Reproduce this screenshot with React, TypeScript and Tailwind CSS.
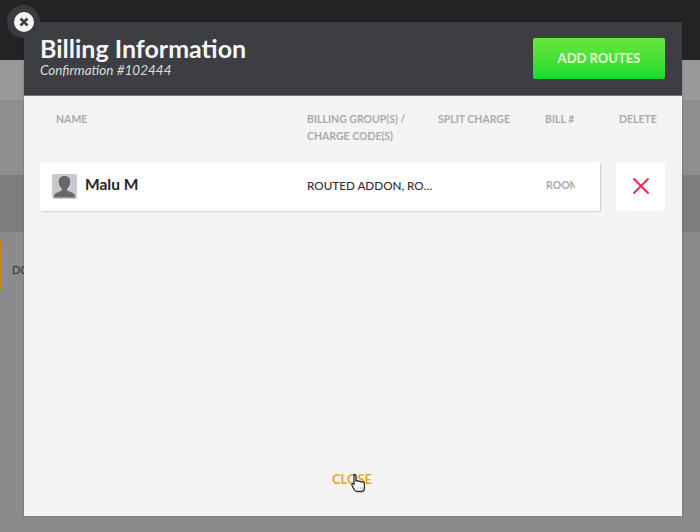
import React from "react";

const Avatar = () => (
  <div className="mt-[2px] h-[25px] w-[25px] shrink-0 overflow-hidden rounded-[2px] bg-[#c9c9cb]">
    <svg viewBox="0 0 25 25" className="h-full w-full">
      <path
        d="M12.5 2c-4 0-6 2.6-5.8 6 .1 2.8 1.5 5.2 3.1 6.4v2c-1.2 1-5.6 1.9-7 3.5-.6.7-.8 2.3-.8 3.6h21c0-1.3-.2-2.9-.8-3.6-1.4-1.6-5.8-2.5-7-3.5v-2c1.6-1.2 3-3.6 3.1-6.4.2-3.4-1.8-6-5.8-6z"
        fill="#68686c"
      />
    </svg>
  </div>
);

const Background = () => (
  <div className="flex h-[532px] w-[700px] flex-col bg-[#8b8b8d]">
    <div className="h-[60px] bg-[#232325]" />
    <div className="h-[40px] bg-[#99999a]" />
    <div className="h-[75px] bg-[#8e8e90]" />
    <div className="h-[57px] bg-[#7e7e7f]" />
    <div className="mt-[8px] flex h-[50px] items-center gap-[10px]">
      <div className="h-[50px] w-[2px] rounded-r-[2px] bg-[#cc8608]" />
      <span className="pt-[10px] text-[11px] font-medium text-[#38383a]">DONE</span>
    </div>
  </div>
);

export default function App() {
  return (
    <div className="relative h-[532px] w-[700px] overflow-hidden font-['Lato',sans-serif]">
      <Background />

      <div className="absolute left-[24px] top-[22px] flex h-[494px] w-[658px] flex-col bg-[#f4f4f5] shadow-[0_0_2px_rgba(0,0,0,0.25)]">
        <div className="flex h-[74px] items-start justify-between border-b border-[#77777a] bg-[#3d3e42] pl-[16px] pr-[17px]">
          <div className="pt-[11px]">
            <h1 className="text-[25px] font-bold leading-[30px] text-[#f4f4f5]">
              Billing Information
            </h1>
            <p className="text-[13.5px] italic leading-[14px] text-[#dcdcde]">
              Confirmation #102444
            </p>
          </div>
          <button className="mt-[16px] h-[41px] w-[132px] rounded-[2px] bg-gradient-to-b from-[#66e63f] to-[#0fdc2c] text-[13px] font-bold text-[#e6f7df]">
            ADD ROUTES
          </button>
        </div>

        <div className="flex-1 px-[16px]">
          <div className="flex h-[66px] pt-[15px] text-[10.5px] font-bold leading-[17px] text-[#ababad]">
            <div className="w-[267px] pl-[16px]">NAME</div>
            <div className="w-[131px]">
              BILLING GROUP(S) /<br />
              CHARGE CODE(S)
            </div>
            <div className="w-[107px]">SPLIT CHARGE</div>
            <div className="w-[74px]">BILL #</div>
            <div>DELETE</div>
          </div>

          <div className="flex gap-[16px]">
            <div className="flex h-[49px] w-[560px] items-center rounded-[2px] bg-white pb-[2px] pl-[12px] shadow-[1px_1px_1px_rgba(0,0,0,0.16)]">
              <div className="flex w-[255px] items-center gap-[8px]">
                <Avatar />
                <span className="pb-[1px] text-[15.5px] font-bold text-[#252527]">Malu M</span>
              </div>
              <div className="w-[239px] text-[11.7px] font-medium text-[#303032]">ROUTED ADDON, RO…</div>
              <div className="w-[29px] overflow-hidden text-[10.5px] font-bold text-[#a9a9ab]">ROOM</div>
            </div>
            <div className="flex h-[49px] w-[49px] items-center justify-center rounded-[2px] bg-white pb-[1px]">
              <svg viewBox="0 0 18 18" className="h-[18px] w-[18px]" fill="none" stroke="#f0284f" strokeWidth="2">
                <path d="M1.5 1.5 16.5 16.5M16.5 1.5 1.5 16.5" />
              </svg>
            </div>
          </div>
        </div>

        <div className="flex h-[76px] items-start justify-center border-t border-[#efeff0] pr-[2px] pt-[29px]">
          <span className="text-[13px] font-bold text-[#eba52b]">CLOSE</span>
        </div>
      </div>

      {/* close badge over the modal corner */}
      <div className="absolute left-[7px] top-[5px] flex h-[33px] w-[33px] items-center justify-center rounded-full bg-[#3a3b3f]">
        <div className="flex h-[20px] w-[20px] items-center justify-center rounded-full bg-[#f4f4f5]">
          <svg viewBox="0 0 10 10" className="h-[10px] w-[10px]" fill="none" stroke="#3d3e42" strokeWidth="2.6">
            <path d="M1.5 1.5 8.5 8.5M8.5 1.5 1.5 8.5" />
          </svg>
        </div>
      </div>

      {/* pointer cursor captured in the shot */}
      <svg viewBox="0 0 18 20" className="absolute left-[350px] top-[473px] h-[20px] w-[18px]">
        <path
          d="M4.5 1.5c.9 0 1.5.6 1.5 1.5v5l1.2-.3c.6 0 1 .2 1.3.6l1.2-.2c.6 0 1 .3 1.2.7l1.1-.1c1.2.1 2.4 1 2.4 2.3v4.5c0 1.8-1.2 3-3 3H7c-1.4 0-2.2-.7-2.8-1.8L2 12.3c-.3-.7 0-1.3.6-1.6.5-.2 1-.1 1.4.3V3c0-.9-.4-1.5.5-1.5z"
          fill="#fff"
          stroke="#2c2c2e"
          strokeWidth="1.3"
        />
        <path d="M7.5 15h.8M10 15h.8M12.5 15h.8" stroke="#555" strokeWidth="1" />
      </svg>
    </div>
  );
}
